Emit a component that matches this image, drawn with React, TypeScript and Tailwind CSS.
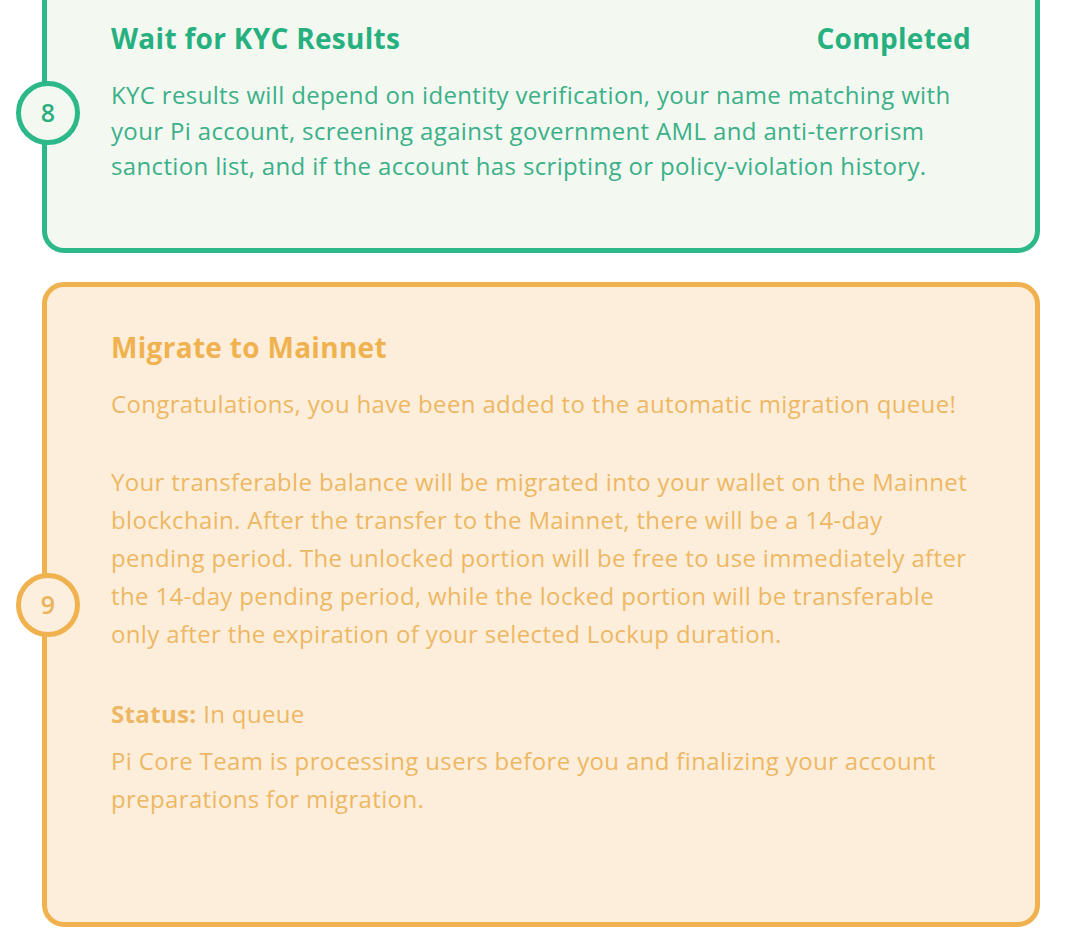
import React from 'react'

type Tone = 'green' | 'orange'

const tones = {
  green: {
    card: 'border-[#2db88a] bg-[#f3f9f1]',
    circle: 'border-[#2db88a] bg-[#f3f9f1] text-[#2aae80]',
    title: 'text-[#27b07f]',
    body: 'text-[#3bb088]',
  },
  orange: {
    card: 'border-[#f0b24f] bg-[#fdeedb]',
    circle: 'border-[#f0b24f] bg-[#fdefdd] text-[#ecb45a]',
    title: 'text-[#f0b24f]',
    body: 'text-[#edb863]',
  },
}

// each string is one rendered line
function Lines({ lines }: { lines: string[] }) {
  return (
    <>
      {lines.map((l) => (
        <span key={l} className="block whitespace-nowrap">
          {l}
        </span>
      ))}
    </>
  )
}

function StepCard({
  step,
  tone,
  height,
  children,
}: {
  step: number
  tone: Tone
  height: string
  children: React.ReactNode
}) {
  const t = tones[tone]
  return (
    <div className={`relative rounded-[22px] border-[5px] ${t.card} ${height}`}>
      <div
        className={`absolute left-[-31px] top-1/2 -translate-y-1/2 flex h-[64px] w-[64px] items-center justify-center rounded-full border-[5px] text-[25px] font-semibold ${t.circle}`}
      >
        {step}
      </div>
      <div className="px-[64px] pt-[41px]">{children}</div>
    </div>
  )
}

export default function App() {
  const g = tones.green
  const o = tones.orange
  return (
    <div
      className="min-h-[950px] w-[1080px] overflow-hidden bg-white"
      style={{ fontFamily: '"Open Sans", "Noto Sans", sans-serif' }}
    >
      <div className="ml-[42px] mt-[-27px] flex w-[998px] flex-col gap-[29px]">
        <StepCard step={8} tone="green" height="h-[280px]">
          <div className={`flex items-center justify-between text-[28px] font-bold leading-[38px] tracking-[0.3px] ${g.title}`}>
            <span>Wait for KYC Results</span>
            <span>Completed</span>
          </div>
          <p className={`mt-[20px] text-[24px] leading-[35.5px] tracking-[0.35px] ${g.body}`}>
            <Lines
              lines={[
                'KYC results will depend on identity verification, your name matching with',
                'your Pi account, screening against government AML and anti-terrorism',
                'sanction list, and if the account has scripting or policy-violation history.',
              ]}
            />
          </p>
        </StepCard>

        <StepCard step={9} tone="orange" height="h-[645px]">
          <h2 className={`text-[28px] font-bold leading-[38px] tracking-[0.3px] ${o.title}`}>Migrate to Mainnet</h2>
          <div className={`mt-[19px] text-[24px] leading-[38px] tracking-[0.35px] ${o.body}`}>
            <p>Congratulations, you have been added to the automatic migration queue!</p>
            <p className="mt-[40px]">
              <Lines
                lines={[
                  'Your transferable balance will be migrated into your wallet on the Mainnet',
                  'blockchain. After the transfer to the Mainnet, there will be a 14-day',
                  'pending period. The unlocked portion will be free to use immediately after',
                  'the 14-day pending period, while the locked portion will be transferable',
                  'only after the expiration of your selected Lockup duration.',
                ]}
              />
            </p>
            <p className="mt-[42px]">
              <span className="font-bold">Status:</span> In queue
            </p>
            <p className="mt-[9px]">
              <Lines
                lines={[
                  'Pi Core Team is processing users before you and finalizing your account',
                  'preparations for migration.',
                ]}
              />
            </p>
          </div>
        </StepCard>
      </div>
    </div>
  )
}
